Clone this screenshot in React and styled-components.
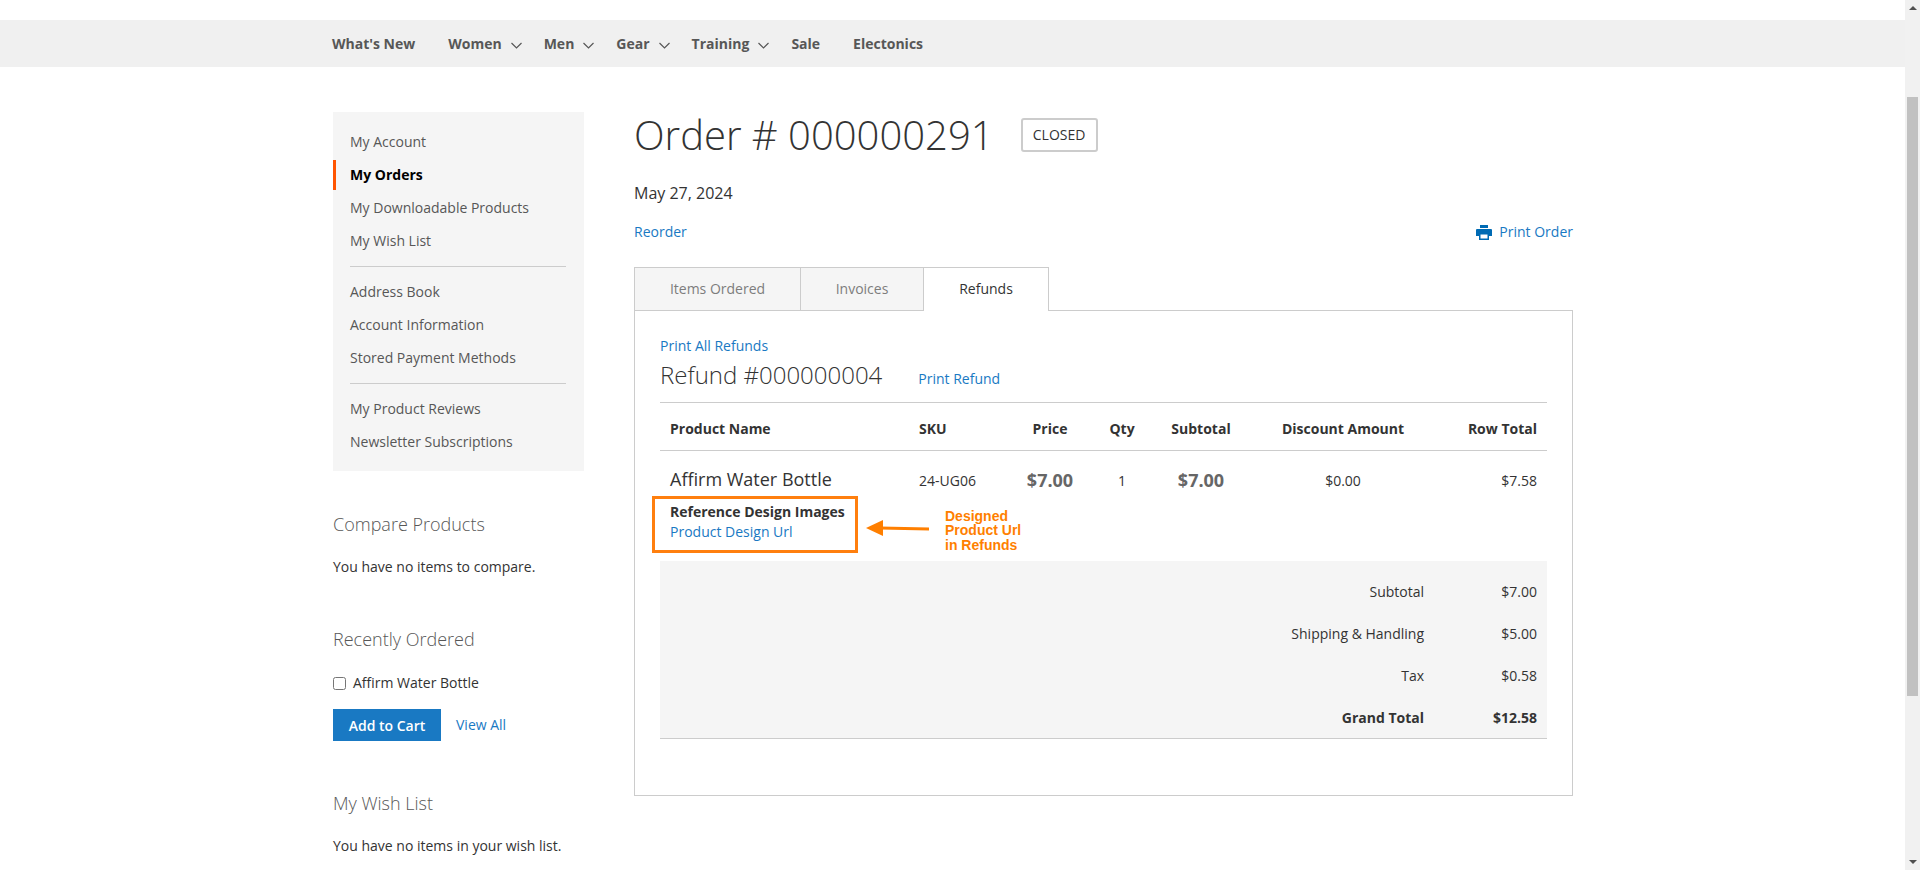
import React from "react";
import styled, { createGlobalStyle } from "styled-components";

const GlobalStyle = createGlobalStyle`
    html, body {
        margin: 0;
        padding: 0;
        height: 100%;
    }
    body {
        font-family: "Open Sans", "Liberation Sans", sans-serif;
        font-size: 14px;
        line-height: 20px;
        color: #333;
        background: #fff;
    }
`;

const Shell = styled.div`
    display: flex;
    height: 100vh;
    overflow: hidden;
`;

const Viewport = styled.div`
    flex: 1;
    min-width: 0;
    padding-top: 20px;
`;

/* fake scrollbar, the page in the picture is scrolled down a bit */
const ScrollTrack = styled.div`
    width: 15px;
    flex: none;
    display: flex;
    flex-direction: column;
    align-items: center;
    background: #f1f1f1;
`;

const ScrollArrow = styled.span`
    flex: none;
    width: 0;
    height: 0;
    border-left: 4px solid transparent;
    border-right: 4px solid transparent;
    margin: ${(p) => (p.$down ? "auto 0 6px" : "6px 0 0")};
    ${(p) => (p.$down ? "border-top: 4px solid #505050;" : "border-bottom: 4px solid #505050;")}
`;

const ScrollThumb = styled.div`
    flex: none;
    width: 11px;
    height: 599px;
    margin-top: 87px;
    background: #c1c1c1;
`;

const NavBar = styled.nav`
    display: flex;
    align-items: center;
    height: 47px;
    padding-left: 332px;
    background: #f0f0f0;
`;

const NavItem = styled.a`
    display: flex;
    align-items: center;
    margin-right: ${(p) => (p.$drop ? "42px" : "33px")};
    position: relative;
    font-weight: 700;
    color: #575757;
`;

const Chevron = styled.svg`
    position: absolute;
    right: -20px;
    top: 8px;
    width: 11px;
    height: 7px;
    fill: none;
    stroke: #575757;
    stroke-width: 1.2;
`;

const Columns = styled.div`
    display: grid;
    grid-template-columns: 251px 939px;
    column-gap: 50px;
    padding: 45px 0 0 333px;
`;

const Sidebar = styled.aside`
    min-width: 0;
`;

const AccountNav = styled.div`
    padding: 15px 0 11px;
    background: #f5f5f5;
`;

const AccountLink = styled.a`
    display: block;
    margin-bottom: 3px;
    padding: 5px 17px;
    color: ${(p) => (p.$active ? "#000" : "#575757")};
    font-weight: ${(p) => (p.$active ? 700 : 400)};
    ${(p) => p.$active && "border-left: 3px solid #ff5501; padding-left: 14px;"}
`;

const NavDivider = styled.div`
    height: 1px;
    margin: 10px 18px 10px 17px;
    background: #ccc;
`;

const BlockTitle = styled.div`
    margin-top: ${(p) => p.$top};
    font-size: 18px;
    line-height: 22px;
    font-weight: 300;
    color: #575757;
`;

const BlockText = styled.div`
    margin-top: 22px;
`;

const CheckRow = styled.label`
    display: flex;
    align-items: center;
    margin-top: 23px;
`;

const Check = styled.input`
    width: 13px;
    height: 13px;
    margin: 0 7px 0 0;
`;

const ActionsRow = styled.div`
    display: flex;
    align-items: center;
    gap: 15px;
    margin-top: 16px;
`;

const CartButton = styled.button`
    width: 108px;
    height: 32px;
    padding: 0;
    border: 0;
    background: #1979c3;
    color: #fff;
    font-family: inherit;
    font-size: 14px;
    font-weight: 600;
`;

const Link = styled.a`
    color: #1979c3;
`;

const Main = styled.main`
    min-width: 0;
`;

const TitleRow = styled.div`
    display: flex;
    align-items: center;
    height: 46px;
`;

const PageTitle = styled.h1`
    margin: 0;
    font-size: 40px;
    line-height: 46px;
    font-weight: 300;
    color: #333;
`;

const StatusBadge = styled.span`
    box-sizing: border-box;
    width: 77px;
    height: 34px;
    margin-left: 27px;
    border: 2px solid #ccc;
    border-radius: 3px;
    font-size: 14px;
    line-height: 30px;
    text-align: center;
    color: #333;
`;

const OrderDate = styled.div`
    margin-top: 25px;
    font-size: 16px;
`;

const ActionBar = styled.div`
    display: flex;
    justify-content: space-between;
    margin-top: 19px;
`;

const PrintLink = styled(Link)`
    display: flex;
    align-items: center;
    gap: 7px;
`;

const PrintIcon = styled.svg`
    width: 16px;
    height: 15px;
    fill: #006bb4;
`;

const TabRow = styled.div`
    display: flex;
    margin-top: 25px;
    margin-bottom: -1px;
    position: relative;
`;

const Tab = styled.div`
    box-sizing: border-box;
    width: ${(p) => p.$width};
    height: 44px;
    margin-right: -1px;
    border: 1px solid #ccc;
    border-bottom: ${(p) => (p.$active ? "0" : "1px solid #ccc")};
    background: ${(p) => (p.$active ? "#fff" : "#f5f5f5")};
    color: ${(p) => (p.$active ? "#333" : "#7d7d7d")};
    line-height: 42px;
    text-align: center;
`;

const Panel = styled.section`
    box-sizing: border-box;
    width: 939px;
    padding: 25px;
    border: 1px solid #ccc;
`;

const RefundHead = styled.div`
    display: flex;
    align-items: baseline;
    gap: 36px;
    margin-top: 4px;
    margin-bottom: 12px;
`;

const RefundTitle = styled.div`
    font-size: 24px;
    line-height: 30px;
    font-weight: 300;
`;

const Table = styled.table`
    width: 887px;
    margin-bottom: 31px;
    table-layout: fixed;
    border-collapse: separate;
    border-spacing: 0;
`;

const HeadCell = styled.th`
    padding: 16px 10px 11px;
    border-top: 1px solid #ccc;
    border-bottom: 1px solid #ccc;
    font-weight: 700;
    text-align: ${(p) => p.$align || "left"};
`;

const Cell = styled.td`
    position: relative;
    padding: 20px 10px 0;
    vertical-align: top;
    text-align: ${(p) => p.$align || "left"};
`;

const ProductCell = styled(Cell)`
    padding: 16px 10px 19px;
`;

const ProductName = styled.div`
    font-size: 18px;
    line-height: 24px;
    white-space: nowrap;
    margin-bottom: 11px;
`;

const OptionLabel = styled.div`
    font-weight: 700;
    white-space: nowrap;
`;

const StrongPrice = styled.span`
    display: block;
    margin-top: -1px;
    font-size: 18px;
    font-weight: 700;
    color: #666;
`;

const MarkBox = styled.div`
    position: absolute;
    left: -8px;
    top: 45px;
    box-sizing: border-box;
    width: 206px;
    height: 57px;
    border: 3px solid #ff7f0e;
`;

const MarkArrow = styled.svg`
    position: absolute;
    left: 206px;
    top: 68px;
    width: 64px;
    height: 18px;
    fill: #ff7f00;
    stroke: #ff7f00;
`;

const MarkNote = styled.div`
    position: absolute;
    left: 285px;
    top: 58px;
    width: 90px;
    font-family: "Liberation Sans", Arial, sans-serif;
    font-size: 14px;
    line-height: 14.4px;
    font-weight: 700;
    color: #ff7f00;
`;

const TotalRow = styled.tr`
    td {
        padding: 11px 10px;
        background: #f5f5f5;
        text-align: right;
        font-weight: ${(p) => (p.$grand ? 700 : 400)};
    }
    &:first-child td {
        padding-top: 21px;
    }
    td:first-child {
        padding-right: 15px;
    }
    ${(p) => p.$grand && "td { padding-bottom: 10px; border-bottom: 1px solid #ccc; }"}
`;

const accountLinks = [
    ["My Account", "My Orders", "My Downloadable Products", "My Wish List"],
    ["Address Book", "Account Information", "Stored Payment Methods"],
    ["My Product Reviews", "Newsletter Subscriptions"],
];

const navItems = [
    { label: "What's New" },
    { label: "Women", drop: true },
    { label: "Men", drop: true },
    { label: "Gear", drop: true },
    { label: "Training", drop: true },
    { label: "Sale" },
    { label: "Electonics" },
];

const totals = [
    ["Subtotal", "$7.00"],
    ["Shipping & Handling", "$5.00"],
    ["Tax", "$0.58"],
];

const App = () => {
    return (
        <Shell>
            <GlobalStyle />
            <Viewport>
                <NavBar>
                    {navItems.map((item) => (
                        <NavItem key={item.label} $drop={item.drop}>
                            {item.label}
                            {item.drop && (
                                <Chevron viewBox="0 0 11 7">
                                    <polyline points="0.5,1 5.5,6 10.5,1" />
                                </Chevron>
                            )}
                        </NavItem>
                    ))}
                </NavBar>
                <Columns>
                    <Sidebar>
                        <AccountNav>
                            {accountLinks.map((group, i) => (
                                <React.Fragment key={group[0]}>
                                    {i > 0 && <NavDivider />}
                                    {group.map((label) => (
                                        <AccountLink key={label} $active={label === "My Orders"}>
                                            {label}
                                        </AccountLink>
                                    ))}
                                </React.Fragment>
                            ))}
                        </AccountNav>
                        <BlockTitle $top="42px">Compare Products</BlockTitle>
                        <BlockText>You have no items to compare.</BlockText>
                        <BlockTitle $top="51px">Recently Ordered</BlockTitle>
                        <CheckRow>
                            <Check type="checkbox" />
                            Affirm Water Bottle
                        </CheckRow>
                        <ActionsRow>
                            <CartButton>Add to Cart</CartButton>
                            <Link>View All</Link>
                        </ActionsRow>
                        <BlockTitle $top="51px">My Wish List</BlockTitle>
                        <BlockText>You have no items in your wish list.</BlockText>
                    </Sidebar>
                    <Main>
                        <TitleRow>
                            <PageTitle>Order # 000000291</PageTitle>
                            <StatusBadge>CLOSED</StatusBadge>
                        </TitleRow>
                        <OrderDate>May 27, 2024</OrderDate>
                        <ActionBar>
                            <Link>Reorder</Link>
                            <PrintLink>
                                <PrintIcon viewBox="0 0 16 15">
                                    <path d="M4 0h8v3H4z" />
                                    <path d="M1 4h14a1 1 0 0 1 1 1v6h-3V8H3v3H0V5a1 1 0 0 1 1-1z" />
                                    <path d="M3 8h10v7H3zm1.5 1.5v4h7v-4z" fillRule="evenodd" />
                                </PrintIcon>
                                Print Order
                            </PrintLink>
                        </ActionBar>
                        <TabRow>
                            <Tab $width="167px">Items Ordered</Tab>
                            <Tab $width="124px">Invoices</Tab>
                            <Tab $width="126px" $active>Refunds</Tab>
                        </TabRow>
                        <Panel>
                            <Link>Print All Refunds</Link>
                            <RefundHead>
                                <RefundTitle>Refund #000000004</RefundTitle>
                                <Link>Print Refund</Link>
                            </RefundHead>
                            <Table>
                                <colgroup>
                                    <col style={{ width: 249 }} />
                                    <col style={{ width: 102 }} />
                                    <col style={{ width: 78 }} />
                                    <col style={{ width: 66 }} />
                                    <col style={{ width: 92 }} />
                                    <col style={{ width: 192 }} />
                                    <col style={{ width: 108 }} />
                                </colgroup>
                                <thead>
                                    <tr>
                                        <HeadCell>Product Name</HeadCell>
                                        <HeadCell>SKU</HeadCell>
                                        <HeadCell $align="center">Price</HeadCell>
                                        <HeadCell $align="center">Qty</HeadCell>
                                        <HeadCell $align="center">Subtotal</HeadCell>
                                        <HeadCell $align="center">Discount Amount</HeadCell>
                                        <HeadCell $align="right">Row Total</HeadCell>
                                    </tr>
                                </thead>
                                <tbody>
                                    <tr>
                                        <ProductCell>
                                            <ProductName>Affirm Water Bottle</ProductName>
                                            <OptionLabel>Reference Design Images</OptionLabel>
                                            <Link>Product Design Url</Link>
                                            <MarkBox />
                                            <MarkArrow viewBox="0 0 64 18">
                                                <path d="M0 9 17 1v16z" stroke="none" />
                                                <path d="M14 9 63 10" strokeWidth="3" />
                                            </MarkArrow>
                                            <MarkNote>
                                                Designed
                                                <br />
                                                Product Url
                                                <br />
                                                in Refunds
                                            </MarkNote>
                                        </ProductCell>
                                        <Cell>24-UG06</Cell>
                                        <Cell $align="center"><StrongPrice>$7.00</StrongPrice></Cell>
                                        <Cell $align="center">1</Cell>
                                        <Cell $align="center"><StrongPrice>$7.00</StrongPrice></Cell>
                                        <Cell $align="center">$0.00</Cell>
                                        <Cell $align="right">$7.58</Cell>
                                    </tr>
                                </tbody>
                                <tfoot>
                                    {totals.map(([label, value]) => (
                                        <TotalRow key={label}>
                                            <td colSpan={6}>{label}</td>
                                            <td>{value}</td>
                                        </TotalRow>
                                    ))}
                                    <TotalRow $grand>
                                        <td colSpan={6}>Grand Total</td>
                                        <td>$12.58</td>
                                    </TotalRow>
                                </tfoot>
                            </Table>
                        </Panel>
                    </Main>
                </Columns>
            </Viewport>
            <ScrollTrack>
                <ScrollArrow />
                <ScrollThumb />
                <ScrollArrow $down />
            </ScrollTrack>
        </Shell>
    );
};

export default App;
